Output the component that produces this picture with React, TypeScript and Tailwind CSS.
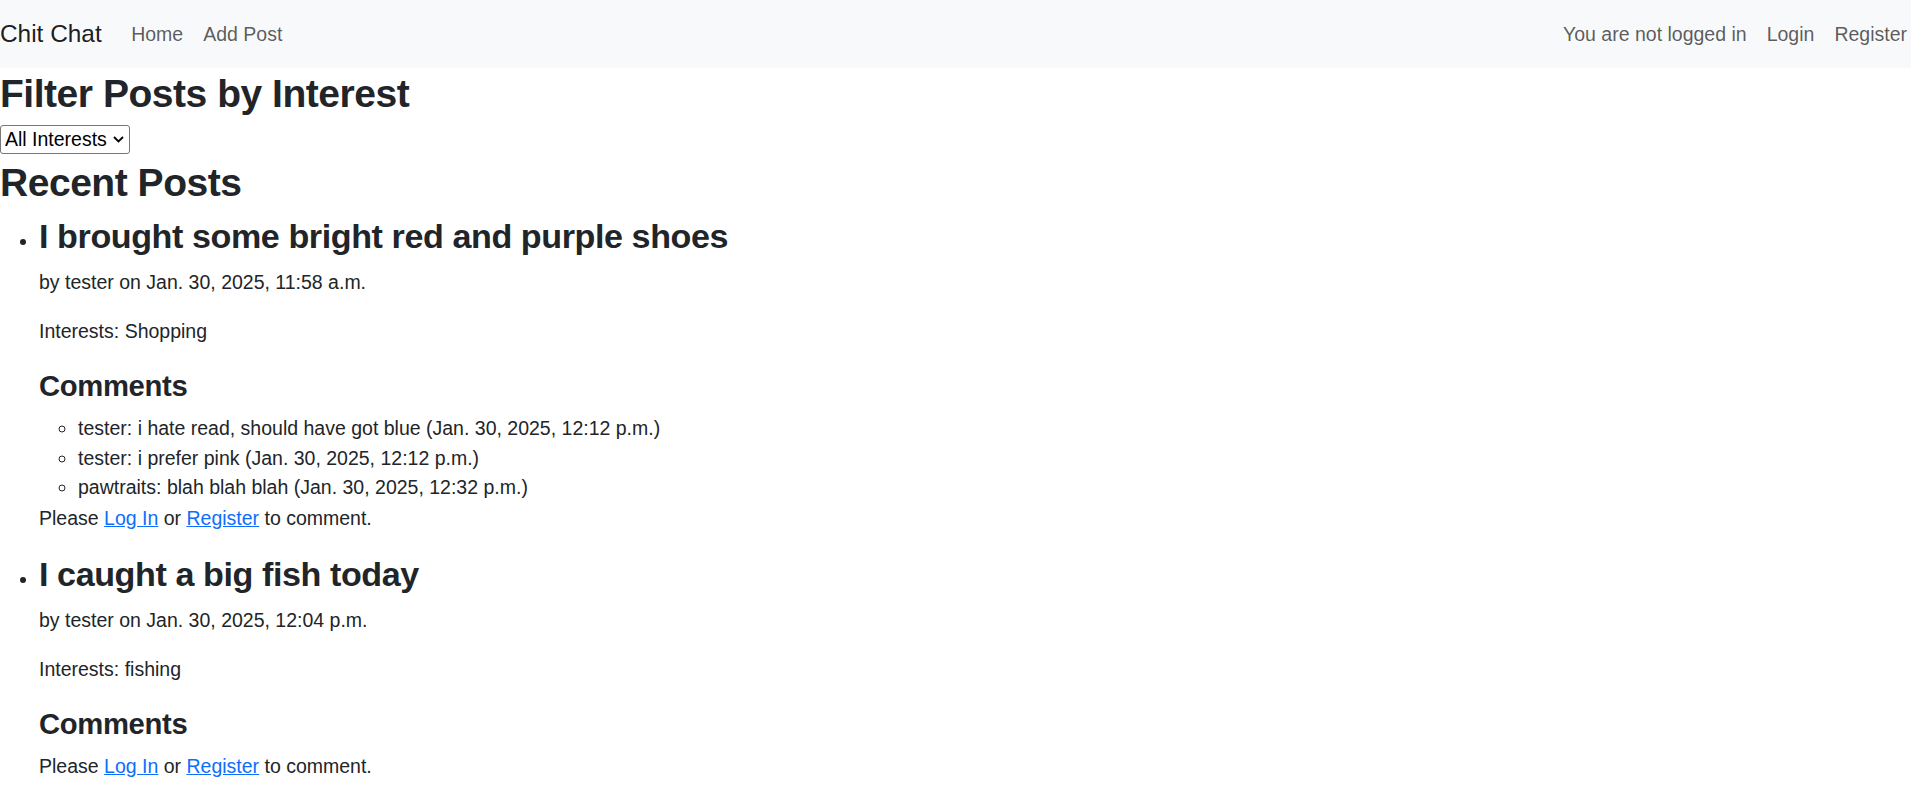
import { useState } from "react";

type Comment = { author: string; text: string; date: string };
type Post = { title: string; author: string; date: string; interests: string; comments: Comment[] };

const posts: Post[] = [
  {
    title: "I brought some bright red and purple shoes",
    author: "tester",
    date: "Jan. 30, 2025, 11:58 a.m.",
    interests: "Shopping",
    comments: [
      { author: "tester", text: "i hate read, should have got blue", date: "Jan. 30, 2025, 12:12 p.m." },
      { author: "tester", text: "i prefer pink", date: "Jan. 30, 2025, 12:12 p.m." },
      { author: "pawtraits", text: "blah blah blah", date: "Jan. 30, 2025, 12:32 p.m." },
    ],
  },
  {
    title: "I caught a big fish today",
    author: "tester",
    date: "Jan. 30, 2025, 12:04 p.m.",
    interests: "fishing",
    comments: [],
  },
];

function Navbar() {
  return (
    <nav className="flex items-center justify-between bg-[#f8f9fa] py-[9.75px]">
      <div className="flex items-center">
        <a href="#" className="mr-[19.5px] py-[6.1px] text-[24.4px] leading-[1.5] text-black/90">
          Chit Chat
        </a>
        <a href="#" className="px-[10px] py-[9.75px] text-[19.5px] leading-[1.5] text-black/65">
          Home
        </a>
        <a href="#" className="px-[10px] py-[9.75px] text-[19.5px] leading-[1.5] text-black/65">
          Add Post
        </a>
      </div>
      <div className="flex items-center pr-[4px]">
        <span className="px-[10px] py-[9.75px] text-[19.5px] leading-[1.5] text-black/65">
          You are not logged in
        </span>
        <a href="#" className="px-[10px] py-[9.75px] text-[19.5px] leading-[1.5] text-black/65">
          Login
        </a>
        <a href="#" className="pl-[10px] py-[9.75px] text-[19.5px] leading-[1.5] text-black/65">
          Register
        </a>
      </div>
    </nav>
  );
}

function PostItem({ post }: { post: Post }) {
  return (
    <li>
      <h3 className="mb-[11.6px] pt-[1.2px] text-[34.1px] font-semibold leading-[1.2] tracking-[-0.012em]">
        {post.title}
      </h3>
      <p className="mb-[19.5px]">
        by {post.author} on {post.date}
      </p>
      <p className="mb-[19.5px]">Interests: {post.interests}</p>
      <h4 className="mb-[9.75px] pt-[3.7px] text-[29.25px] font-semibold leading-[1.2] tracking-[-0.012em]">
        Comments
      </h4>
      <ul className="list-[circle] pl-[39px]">
        {post.comments.map((c, i) => (
          <li key={i}>
            {c.author}: {c.text} ({c.date})
          </li>
        ))}
      </ul>
      <p className="mb-[19.5px] mt-[1.8px]">
        Please{" "}
        <a href="#" className="text-[#0d6efd] underline">
          Log In
        </a>{" "}
        or{" "}
        <a href="#" className="text-[#0d6efd] underline">
          Register
        </a>{" "}
        to comment.
      </p>
    </li>
  );
}

export default function App() {
  const [interest, setInterest] = useState("all");

  return (
    <div className="min-h-screen bg-white font-['Liberation_Sans',Arial,sans-serif] text-[19.5px] leading-[1.5] text-[#212529]">
      <Navbar />

      <h2 className="mb-[7.35px] pt-[2.4px] text-[39px] font-semibold leading-[1.2] tracking-[-0.012em]">
        Filter Posts by Interest
      </h2>
      <div className="relative mb-[3.7px] w-[130px]">
        <select
          value={interest}
          onChange={(e) => setInterest(e.target.value)}
          className="block h-[29.5px] w-full appearance-none rounded-[3px] border border-[#767676] bg-white pl-[4px] pr-[22px] text-[19.5px] leading-[1.2] text-black"
        >
          <option value="all">All Interests</option>
          <option value="shopping">Shopping</option>
          <option value="fishing">fishing</option>
        </select>
        <svg
          className="pointer-events-none absolute right-[6px] top-[11px]"
          width="11"
          height="7"
          viewBox="0 0 11 7"
          fill="none"
        >
          <path d="M1 1l4.5 4.5L10 1" stroke="#000" strokeWidth="1.8" />
        </svg>
      </div>

      <h2 className="mb-[7.35px] pt-[2.4px] text-[39px] font-semibold leading-[1.2] tracking-[-0.012em]">
        Recent Posts
      </h2>
      <ul className="mb-[19.5px] list-disc pl-[39px]">
        {posts.map((p) => (
          <PostItem key={p.title} post={p} />
        ))}
      </ul>
    </div>
  );
}
